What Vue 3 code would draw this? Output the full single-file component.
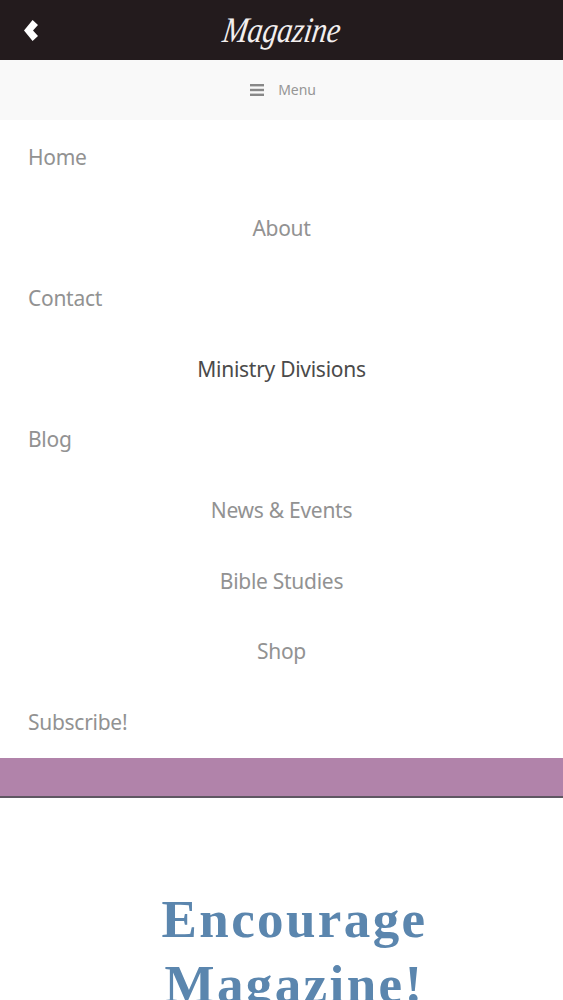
<script setup>
const items = [
  { label: 'Home', side: 'left' },
  { label: 'About', side: 'center' },
  { label: 'Contact', side: 'left' },
  { label: 'Ministry Divisions', side: 'center', active: true },
  { label: 'Blog', side: 'left' },
  { label: 'News & Events', side: 'center' },
  { label: 'Bible Studies', side: 'center' },
  { label: 'Shop', side: 'center' },
  { label: 'Subscribe!', side: 'left' },
]
</script>

<template>
  <div class="page">
    <header class="topbar">
      <svg class="back" viewBox="0 0 14 21" width="14" height="21" aria-hidden="true">
        <path d="M8.6 0 L14 5 L9 10.5 L14 16 L8.6 21 L0 10.5 Z" fill="#fff" />
      </svg>
      <h1 class="brand">Magazine</h1>
    </header>
    <div class="menubar">
      <svg class="burger" viewBox="0 0 14 12" width="14" height="12" aria-hidden="true">
        <rect x="0" y="0" width="14" height="2.4" fill="#888" />
        <rect x="0" y="4.8" width="14" height="2.4" fill="#888" />
        <rect x="0" y="9.6" width="14" height="2.4" fill="#888" />
      </svg>
      <span class="menulabel">Menu</span>
    </div>
    <nav class="nav">
      <a
        v-for="item in items"
        :key="item.label"
        class="item"
        :class="[item.side, { active: item.active }]"
      >{{ item.label }}</a>
    </nav>
    <div class="band"></div>
    <h2 class="title">Encourage<br />Magazine!</h2>
  </div>
</template>

<style>
html, body { margin: 0; background: #fff; overflow: hidden; }
</style>

<style scoped>
.page {
  width: 563px;
  height: 1000px;
  overflow: hidden;
  background: #fff;
  font-family: "Noto Sans", sans-serif;
}
.topbar {
  position: relative;
  height: 60px;
  background: #231b1d;
  display: flex;
  align-items: center;
  justify-content: center;
}
.back {
  position: absolute;
  left: 24px;
  top: 20px;
}
.brand {
  margin: 0;
  font-family: "Liberation Serif", serif;
  font-style: italic;
  font-weight: 400;
  font-size: 36px;
  line-height: 60px;
  color: #f2eeee;
  transform: scaleX(0.84) skewX(-10deg);
  letter-spacing: -0.3px;
}
.menubar {
  height: 60px;
  background: #f9f9f9;
  display: flex;
  align-items: center;
  justify-content: center;
  gap: 14px;
  padding-left: 3px;
  box-sizing: border-box;
}
.menulabel {
  font-size: 14px;
  color: #969696;
  letter-spacing: -0.1px;
  position: relative;
  top: -1px;
}
.nav {
  display: flex;
  flex-direction: column;
  padding-top: 2px;
}
.item {
  height: 70.6px;
  line-height: 70.6px;
  font-size: 21px;
  letter-spacing: -0.28px;
  color: #929292;
}
.item.left {
  padding-left: 28px;
  text-align: left;
}
.item.center {
  text-align: center;
}
.item.active {
  color: #4a4a4a;
}
.band {
  height: 38px;
  background: #b183aa;
  border-bottom: 2px solid #5f5762;
  margin-top: 0.6px;
}
.title {
  margin: 89px 0 0;
  padding-left: 26px;
  text-align: center;
  font-family: "Liberation Serif", serif;
  font-weight: 700;
  font-size: 53px;
  line-height: 65px;
  letter-spacing: 2.4px;
  color: #5b86ae;
}
</style>
